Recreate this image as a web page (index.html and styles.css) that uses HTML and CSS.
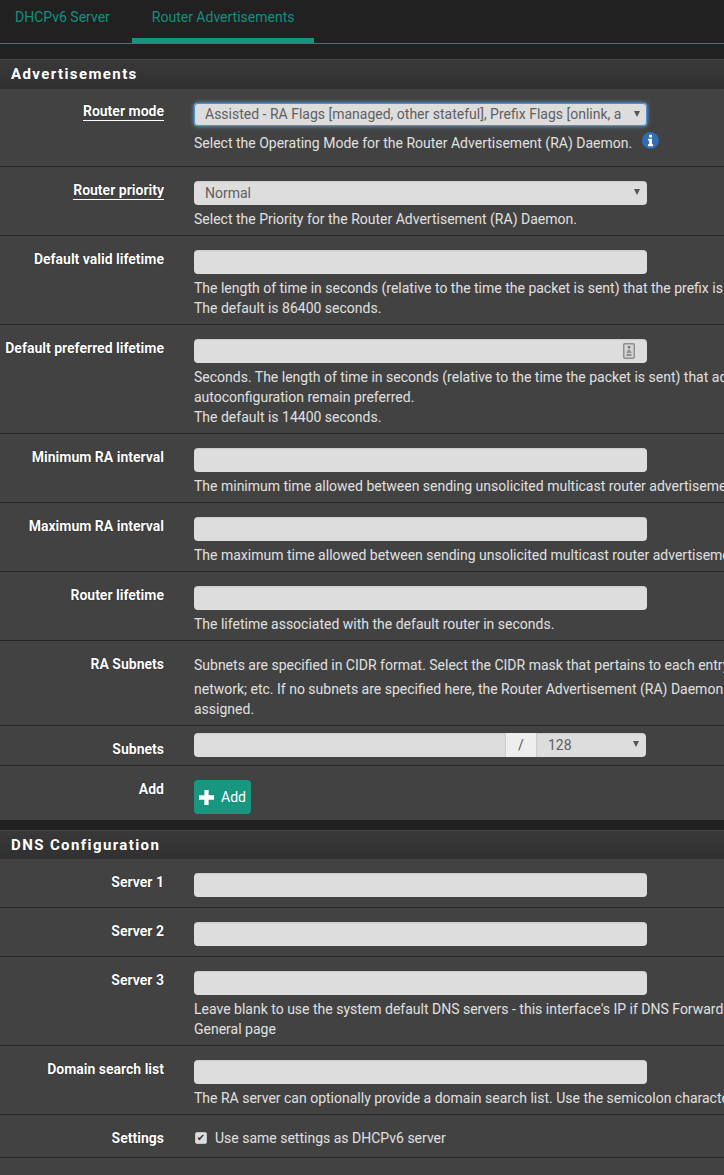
FILE: index.html
```html
<!DOCTYPE html>
<html>
    <head>
        <meta name="viewport" content="width=device-width, initial-scale=1" />
        <title>Router Advertisements</title>
        <link rel="stylesheet" href="styles.css">
    </head>
    <body>
        <div class="tabs">
            <a class="tab" href="#">DHCPv6 Server</a>
            <a class="tab active" href="#">Router Advertisements</a>
        </div>

        <div class="panel">
            <h2 class="panel-title">Advertisements</h2>

            <div class="row row-mode">
                <label class="lbl"><span class="link">Router mode</span></label>
                <div class="ctl">
                    <div class="sel">
                        <select class="input focus">
                            <option>Assisted - RA Flags [managed, other stateful], Prefix Flags [onlink, auto, router]</option>
                        </select>
                    </div>
                    <div class="help help-icon">
                        <span>Select the Operating Mode for the Router Advertisement (RA) Daemon.</span>
                        <svg class="info" viewBox="0 0 16 16" width="17" height="17">
                            <circle cx="8" cy="8" r="8" fill="#2f6db5" />
                            <rect x="6.7" y="2.6" width="2.7" height="2.5" fill="#fff" />
                            <path d="M5.6 6.4h3.8v5.2h1.1v1.7H5.6v-1.7h1.1V8.1H5.6z" fill="#fff" />
                        </svg>
                    </div>
                </div>
            </div>

            <div class="row">
                <label class="lbl"><span class="link">Router priority</span></label>
                <div class="ctl">
                    <div class="sel">
                        <select class="input"><option>Normal</option></select>
                    </div>
                    <div class="help">Select the Priority for the Router Advertisement (RA) Daemon.</div>
                </div>
            </div>

            <div class="row">
                <label class="lbl">Default valid lifetime</label>
                <div class="ctl">
                    <input class="input" type="text">
                    <div class="help">The length of time in seconds (relative to the time the packet is sent) that the prefix is valid for the purpose of on-link determination.<br>The default is 86400 seconds.</div>
                </div>
            </div>

            <div class="row">
                <label class="lbl">Default preferred lifetime</label>
                <div class="ctl">
                    <div class="field">
                        <input class="input" type="text">
                        <svg class="keyicon" viewBox="0 0 12 16" width="12" height="16">
                            <rect x="0.75" y="0.75" width="10.5" height="14.5" rx="1" fill="#d4d4d4" stroke="#8f8f8f" stroke-width="1.5" />
                            <rect x="4.8" y="3" width="2.4" height="2.4" fill="#777" />
                            <path d="M3.5 9l2.5-3 2.5 3v1h-5zM3.5 11h5v2h-5z" fill="#8f8f8f" />
                        </svg>
                    </div>
                    <div class="help">Seconds. The length of time in seconds (relative to the time the packet is sent) that addresses generated from the prefix via stateless address<br>autoconfiguration remain preferred.<br>The default is 14400 seconds.</div>
                </div>
            </div>

            <div class="row">
                <label class="lbl">Minimum RA interval</label>
                <div class="ctl">
                    <input class="input" type="text">
                    <div class="help">The minimum time allowed between sending unsolicited multicast router advertisements in seconds.</div>
                </div>
            </div>

            <div class="row">
                <label class="lbl">Maximum RA interval</label>
                <div class="ctl">
                    <input class="input" type="text">
                    <div class="help">The maximum time allowed between sending unsolicited multicast router advertisements in seconds.</div>
                </div>
            </div>

            <div class="row">
                <label class="lbl">Router lifetime</label>
                <div class="ctl">
                    <input class="input" type="text">
                    <div class="help">The lifetime associated with the default router in seconds.</div>
                </div>
            </div>

            <div class="row row-text">
                <label class="lbl">RA Subnets</label>
                <div class="ctl">
                    <div class="help help-first">Subnets are specified in CIDR format. Select the CIDR mask that pertains to each entry.</div>
                    <div class="help">network; etc. If no subnets are specified here, the Router Advertisement (RA) Daemon will advertise to the subnet to which the router's interface is<br>assigned.</div>
                </div>
            </div>

            <div class="row row-subnet">
                <label class="lbl">Subnets</label>
                <div class="ctl group">
                    <input class="input addr" type="text">
                    <span class="slash">/</span>
                    <div class="sel mask">
                        <select class="input"><option>128</option></select>
                    </div>
                </div>
            </div>

            <div class="row">
                <label class="lbl">Add</label>
                <div class="ctl">
                    <button class="btn" type="button">
                        <svg viewBox="0 0 14 14" width="15" height="15">
                            <path d="M5 0h4v5h5v4H9v5H5V9H0V5h5z" fill="#fff" />
                        </svg>
                        Add
                    </button>
                </div>
            </div>
        </div>

        <div class="panel panel-last">
            <h2 class="panel-title">DNS Configuration</h2>

            <div class="row row-plain">
                <label class="lbl">Server 1</label>
                <div class="ctl"><input class="input" type="text"></div>
            </div>

            <div class="row row-plain">
                <label class="lbl">Server 2</label>
                <div class="ctl"><input class="input" type="text"></div>
            </div>

            <div class="row">
                <label class="lbl">Server 3</label>
                <div class="ctl">
                    <input class="input" type="text">
                    <div class="help">Leave blank to use the system default DNS servers - this interface's IP if DNS Forwarder or Resolver is enabled, otherwise the servers configured on the<br>General page</div>
                </div>
            </div>

            <div class="row">
                <label class="lbl">Domain search list</label>
                <div class="ctl">
                    <input class="input" type="text">
                    <div class="help">The RA server can optionally provide a domain search list. Use the semicolon character as separator.</div>
                </div>
            </div>

            <div class="row row-check">
                <label class="lbl">Settings</label>
                <div class="ctl">
                    <label class="check"><input type="checkbox" checked> Use same settings as DHCPv6 server</label>
                </div>
            </div>
        </div>
    </body>
</html>
```

FILE: styles.css
```css
html, body {
    height: 100%;
    overflow: hidden;
}
body {
    background-color: #212121;
    color: #e0e0e0;
    font-family: Roboto, sans-serif;
    font-size: 14px;
    line-height: 20px;
    margin: 0;
}

/* Tabs */
.tabs {
    border-bottom: 1px solid #148c7a;
    display: flex;
    height: 43px;
    margin-bottom: 15px;
}
.tab {
    box-sizing: border-box;
    color: #148f7d;
    height: 43px;
    padding: 7px 22px 0 15px;
    text-decoration: none;
}
.tab.active {
    border-bottom: 5px solid #17937f;
    border-radius: 2px 2px 0 0;
    padding: 7px 20px 0 20px;
}

/* Panels */
.panel {
    background-color: #424242;
    margin-bottom: 10px;
}
.panel-last {
    margin-bottom: 0;
    padding-bottom: 40px;
}
.panel-last .panel-title {
    height: 29px;
}
.panel-title {
    background: linear-gradient(#393939, #303030);
    border-top: 1px solid #444;
    box-sizing: border-box;
    color: #fff;
    font-size: 15px;
    font-weight: 700;
    height: 30px;
    letter-spacing: 1.4px;
    line-height: 28px;
    margin: 0;
    padding-left: 11px;
}

/* Form rows */
.row {
    border-top: 1px solid #262626;
    display: grid;
    grid-template-columns: 164px 1fr;
    column-gap: 30px;
    padding: 14px 0 6px;
    width: 1100px;
}
.row:first-of-type {
    border-top: 0;
}
.lbl {
    color: #fff;
    font-weight: 700;
    margin-top: -1px;
    text-align: right;
    text-shadow: 0 0 1px #000;
    white-space: nowrap;
}
.link {
    border-bottom: 1px solid #fff;
    padding-bottom: 1px;
}
.ctl {
    min-width: 0;
}
.help {
    margin-top: 4px;
    white-space: nowrap;
}
.help-icon {
    align-items: flex-start;
    display: flex;
    gap: 10px;
    margin-top: 7px;
}
.info {
    margin-top: -1px;
}

/* Inputs */
.input {
    appearance: none;
    background-color: #ddd;
    border: 0;
    border-radius: 4px;
    box-shadow: inset 0 1px 1px rgba(0, 0, 0, 0.08);
    box-sizing: border-box;
    color: #606060;
    display: block;
    font-family: Roboto, sans-serif;
    font-size: 14px;
    height: 24px;
    padding: 0 26px 0 11px;
    width: 453px;
}
.input.focus {
    box-shadow: 0 0 4px #66afe9, inset 0 0 0 1px #4a90d9;
    height: 23px;
    margin-bottom: 1px;
    padding-bottom: 2px;
}
.sel, .field {
    position: relative;
    width: 453px;
}
.sel::after {
    content: "";
    border-left: 3px solid transparent;
    border-right: 3px solid transparent;
    border-top: 6px solid #555;
    position: absolute;
    right: 7px;
    top: 8px;
}
.keyicon {
    position: absolute;
    right: 12px;
    top: 4px;
}

.row-mode {
    padding-bottom: 13px;
}
.row-mode .lbl {
    margin-top: -2px;
}
.row-plain {
    padding-bottom: 10px;
}
.row-text .help {
    margin-top: 0;
}
.row-text .help-first {
    margin-bottom: 4px;
}
.row-subnet {
    padding: 7px 0 8px;
}
.row-subnet .lbl {
    margin: 6px 0 -6px;
}

/* Subnet group */
.group {
    display: flex;
}
.addr {
    border-radius: 4px 0 0 4px;
    width: 311px;
}
.slash {
    background-color: #eee;
    border-left: 1px solid #ccc;
    border-right: 1px solid #ccc;
    box-sizing: border-box;
    color: #555;
    height: 24px;
    line-height: 24px;
    text-align: center;
    width: 32px;
}
.mask {
    width: 109px;
}
.mask .input {
    border-radius: 0 4px 4px 0;
    width: 109px;
}

/* Button */
.btn {
    align-items: center;
    background-color: #19967f;
    border: 0;
    border-radius: 4px;
    color: #fff;
    display: flex;
    font-family: Roboto, sans-serif;
    font-size: 14px;
    gap: 7px;
    height: 34px;
    padding: 0 5px;
    width: 57px;
}

/* Checkbox */
.row-check {
    padding: 13px 0 9px;
    border-bottom: 1px solid #262626;
}
.row-check .lbl {
    margin-top: 0;
}
.check {
    align-items: center;
    display: flex;
    gap: 8px;
    white-space: nowrap;
}
.check input {
    appearance: none;
    background-color: #ddd;
    border: 1px solid #c4c4c4;
    border-radius: 2px;
    box-sizing: border-box;
    color: #333;
    font-family: "DejaVu Sans", sans-serif;
    font-size: 10px;
    height: 12px;
    line-height: 10px;
    margin: 0 0 0 1px;
    text-align: center;
    width: 12px;
}
.check input:checked::after {
    content: "\2714";
    display: block;
}
```
